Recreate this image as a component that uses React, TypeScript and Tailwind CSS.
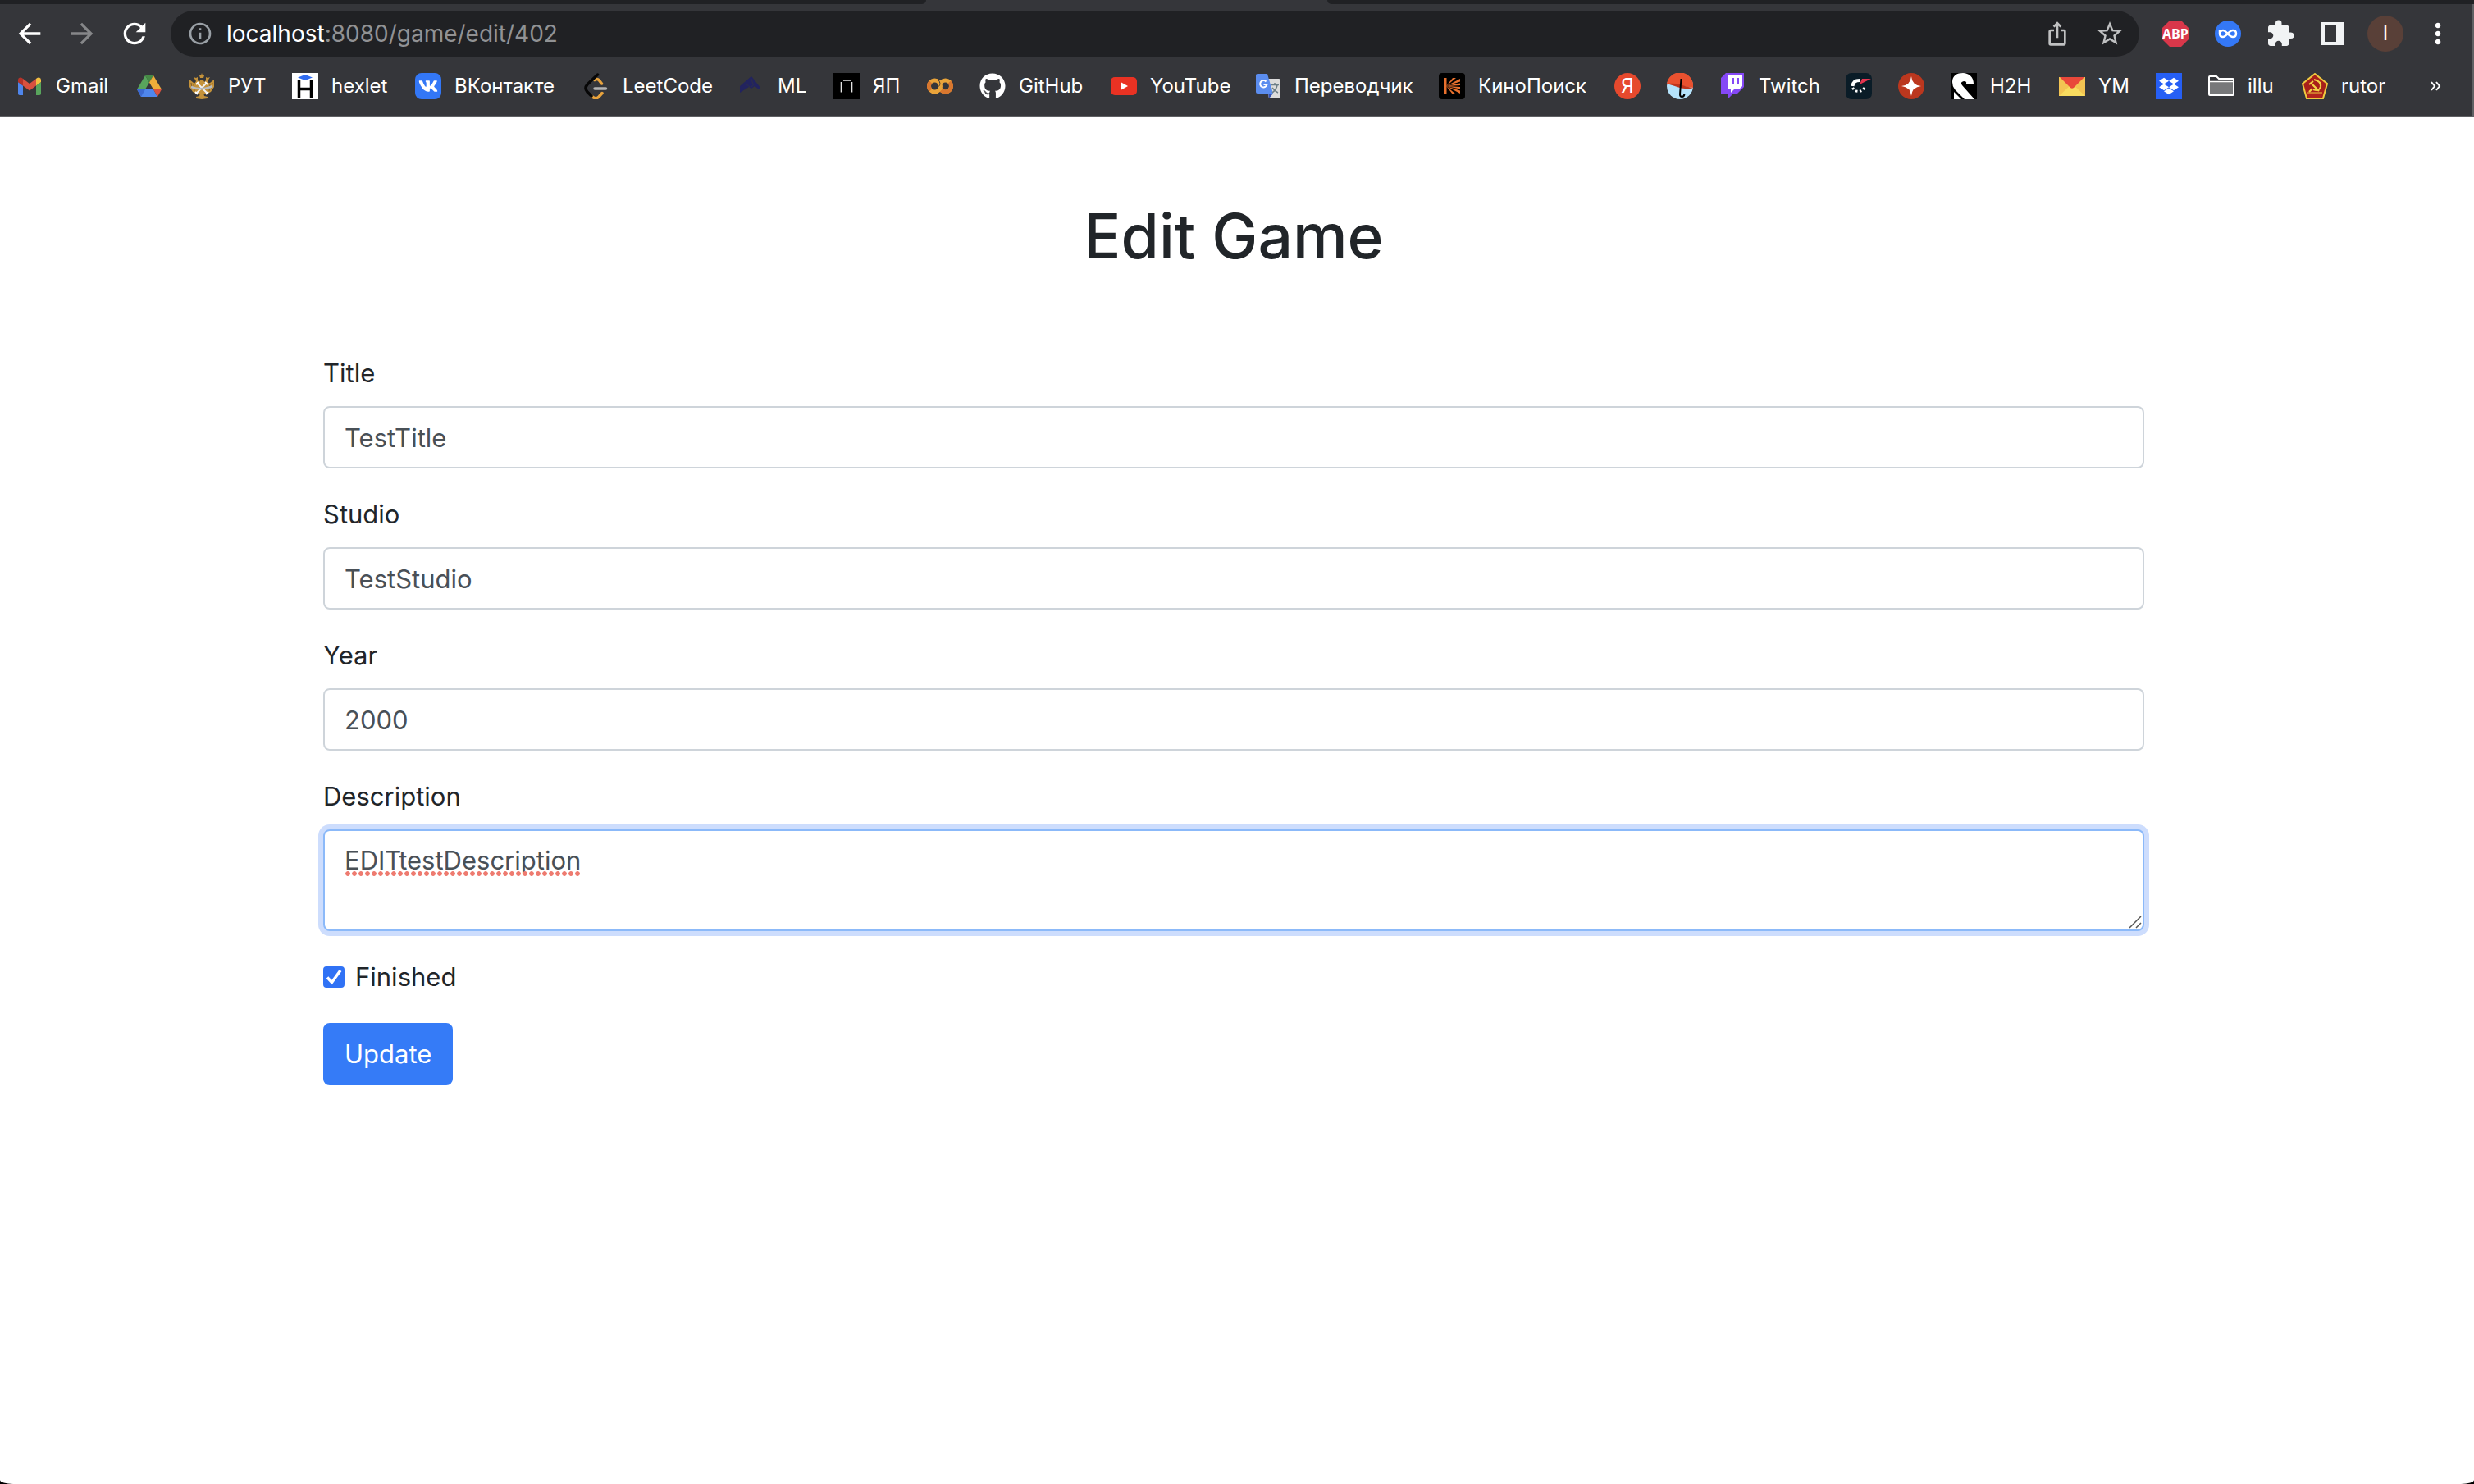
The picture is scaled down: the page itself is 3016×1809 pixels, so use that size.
import { useState, type ReactNode } from "react";
import {
  MdArrowBack,
  MdArrowForward,
  MdExtension,
  MdInfoOutline,
  MdIosShare,
  MdMoreVert,
  MdRefresh,
  MdStarBorder,
} from "react-icons/md";
import { FaDropbox, FaGithub, FaVk } from "react-icons/fa";

function Icon({ children }: { children: ReactNode }) {
  return (
    <svg viewBox="0 0 32 32" className="size-8 shrink-0" aria-hidden="true">
      {children}
    </svg>
  );
}

const gmail = (
  <Icon>
    <path d="M2 11l6 4.500V27H4a2 2 0 0 1-2-2z" fill="#4f86ec" />
    <path d="M24 15.500l6-4.500v14a2 2 0 0 1-2 2h-4z" fill="#58a55c" />
    <path d="M8 7l8 6 8-6v8.500l-8 6-8-6z" fill="#d85140" />
    <path d="M2 8.500a3 3 0 0 1 4.800-2.400L8 7v8.500L2 11z" fill="#b5332a" />
    <path d="M30 8.500a3 3 0 0 0-4.800-2.400L24 7v8.500l6-4.500z" fill="#f1bf42" />
  </Icon>
);

const drive = (
  <Icon>
    <path d="M1 20L11 3l5 8.500L11 20z" fill="#58a55c" />
    <path d="M11 3h10l-5 8.500z" fill="#468a45" />
    <path d="M21 3l10 17H21l-5-8.500z" fill="#eead3a" />
    <path d="M1 20h20l5 9H6z" fill="#4f86ec" />
    <path d="M1 20h10l-5 9z" fill="#3c69d0" />
    <path d="M21 20h10l-5 9z" fill="#d85140" />
  </Icon>
);

const eagle = (
  <Icon>
    <g fill="#c4923a">
      <path d="M16 0l1 3h2l-1 3h-4l-1-3h2z" />
      <path d="M6 5l3 1 2-1v4l2 2-2 3-4-1 2-3zM26 5l-3 1-2-1v4l-2 2 2 3 4-1-2-3z" />
      <path d="M1 8l5 4 5 2 3-5h4l3 5 5-2 5-4v9l-4 6-6 3h-10l-6-3-4-6z" />
      <path d="M14 24h4l1 4 4 1v2l-7 1-7-1v-2l4-1z" />
    </g>
    <path d="M3 12l1 7M6 14l1 8M29 12l-1 7M26 14l-1 8" stroke="#7b5a2a" />
    <path d="M9 25L21 13M23 25L11 13" stroke="#f1f1f1" strokeWidth="2" />
    <path d="M3 17q13 5 26-1" stroke="#b8bcc0" strokeWidth="2.500" fill="none" />
    <path d="M9 14l3-3M20 11l3 3M8 23l3 3M21 26l3-3" stroke="#ffffff" strokeWidth="2" />
  </Icon>
);

const hexlet = (
  <Icon>
    <path d="M0 0h32v32H0z" fill="#fff" />
    <path d="M7 5.500L16 2l9 3.500L16 9z" fill="#2f6bf0" />
    <path d="M8.500 9v21M23.500 9v21M8.500 19.500h15" stroke="#000" strokeWidth="3.500" />
  </Icon>
);

const vk = (
  <span className="flex size-8 shrink-0 items-center justify-center rounded-lg bg-[#3377f6]">
    <FaVk className="size-6 text-white" />
  </span>
);

const leetcode = (
  <Icon>
    <g fill="none" strokeWidth="3.500" strokeLinecap="round">
      <path d="M14 8.500q3-2 5 0l3.500 4.500M10 28q5 5 9 1l4-4.500" stroke="#e8a33d" />
      <path d="M17.500 2L5 14q-4 4.500 0 9l5 5" stroke="#070707" />
      <path d="M14 19h13.500" stroke="#b3b3b3" />
    </g>
  </Icon>
);

const ml = (
  <Icon>
    <path d="M2 24v-8L16 4l11 14-2 2-5-4-4 3-3-2z" fill="#22235f" />
    <path d="M9 13l5 4M16 7l2 7M21 12l-5 5" stroke="#35363a" strokeWidth="0.600" />
  </Icon>
);

const yap = (
  <Icon>
    <path d="M0 0h32v32H0z" fill="#000" />
    <path d="M9.500 11v12.500M22.500 11v12.500M12 9h9" stroke="#e4e4e4" strokeWidth="1.600" />
  </Icon>
);

const colab = (
  <Icon>
    <g fill="none" strokeWidth="5">
      <circle cx="9.500" cy="16" r="7" stroke="#eaa43a" />
      <path d="M4.500 11a7 7 0 0 0 0 10" stroke="#d8772f" />
      <circle cx="22.500" cy="16" r="7" stroke="#eaa43a" />
      <path d="M27.500 11a7 7 0 0 1-10 10" stroke="#d8772f" />
    </g>
    <path d="M14 8.500q3.500 4 0.500 8" stroke="#35363a" fill="none" />
  </Icon>
);

const github = <FaGithub className="size-8 shrink-0 text-white" />;

const youtube = (
  <Icon>
    <rect y="5" width="32" height="22" rx="5" fill="#e93223" />
    <path d="M13 11.500l8 4.500-8 4.500z" fill="#fff" />
  </Icon>
);

const translate = (
  <Icon>
    <path d="M12 7h17a2 2 0 0 1 2 2v20a2 2 0 0 1-2 2H17z" fill="#dcdcdc" />
    <path d="M16 25h6l-5 6z" fill="#3552b5" />
    <path d="M3 1h12l7 24H3a2 2 0 0 1-2-2V3a2 2 0 0 1 2-2z" fill="#5b8def" />
    <path d="M19 14.500h10M24 12v2.500M27 15q-1 5-6 9M21 18q3 4 7 6" stroke="#6d7f87" strokeWidth="1.500" fill="none" />
    <path d="M13.500 10.500a4.200 4.200 0 1 0 1 3.500H10.500" stroke="#fff" strokeWidth="2" fill="none" />
  </Icon>
);

const kinopoisk = (
  <Icon>
    <rect width="32" height="32" rx="4" fill="#000" />
    <g fill="#e8702d">
      <path d="M6 6h3.500v20H6z" />
      <path d="M9 16L17 6h4z" />
      <path d="M9 16l17-9v3.500z" />
      <path d="M9 16l17-3.500V15z" />
      <path d="M9 16l17 1v2.500z" />
      <path d="M9 16l17 5.500V25z" />
      <path d="M9 16l12 10h-4z" />
    </g>
  </Icon>
);

const yandex = (
  <span className="flex size-8 shrink-0 items-center justify-center rounded-full bg-[#e6492d] text-2xl text-white">
    Я
  </span>
);

const umbrella = (
  <Icon>
    <circle cx="16" cy="16" r="16" fill="#b5e3fb" />
    <path d="M0 13A16 16 0 0 1 32 18z" fill="#e9512f" />
    <path d="M0 13q10-1 16 1t16 4.500q-10 1.500-16-0.500T0 13z" fill="#c0351c" />
    <path d="M17.500 7l-1.500 19q0 3 2.500 3t3-3.500" stroke="#000" strokeWidth="2" fill="none" />
  </Icon>
);

const twitch = (
  <Icon>
    <path d="M2 6l6-6h22v17l-9 9h-5l-6 6v-6H2z" fill="#8548f6" />
    <path d="M10 2h18v14l-4 4h-6l-4 4v-4h-4z" fill="#fff" />
    <path d="M16 6h2v7h-2zM22 6h2v7h-2z" fill="#8548f6" />
  </Icon>
);

const gauge = (
  <Icon>
    <rect width="32" height="32" rx="7" fill="#0a1c27" />
    <path d="M17 9q-8 0-8.500 7" stroke="#fff" strokeWidth="4" fill="none" />
    <path d="M8.500 18a8 8 0 0 0 15-2" stroke="#fff" strokeWidth="3" strokeDasharray="2.500 2.500" fill="none" />
    <path d="M17 14l3-7h11z" fill="#e5344f" />
  </Icon>
);

const sparkle = (
  <Icon>
    <circle cx="16" cy="16" r="16" fill="#bb371e" />
    <path d="M16 4q1 11 12 12-11 1-12 12-1-11-12-12 11-1 12-12z" fill="#fff" />
  </Icon>
);

const h2h = (
  <Icon>
    <path d="M0 0h32v32H0z" fill="#000" />
    <path d="M2 11C2 3 8 0 15 0s13 5 13 13h-9q1-3-3-3-5 1-2 5l15 17H17L5 20Q2 16 2 11z" fill="#fff" />
    <path d="M4 23l9 9H4z" fill="#fff" />
  </Icon>
);

const mail = (
  <Icon>
    <path d="M0 5h32v23H0z" fill="#f3c452" />
    <path d="M0 28l14-13h4l14 13z" fill="#f8dc5f" />
    <path d="M1 5h30L18 18q-2 1.500-4 0z" fill="#e9483a" />
  </Icon>
);

const dropbox = (
  <span className="flex size-8 shrink-0 items-center justify-center bg-[#265ff5]">
    <FaDropbox className="size-6 text-white" />
  </span>
);

const folder = (
  <Icon>
    <path d="M1 26V5q0-1 1-1h8l3 3h17q1 0 1 1v18q0 1-1 1H2q-1 0-1-1z" fill="#35363a" stroke="#fff" strokeWidth="2" />
    <path d="M2 11h28v15H2z" fill="#77787a" />
    <path d="M1 10.500h30" stroke="#fff" strokeWidth="1.500" />
  </Icon>
);

const rutor = (
  <Icon>
    <path d="M16 1l15 12-5 18H6L1 13z" fill="#a8201a" stroke="#f0c93f" strokeWidth="2" />
    <path d="M8 24h16v6H8z" fill="#b3241c" />
    <path d="M15 8q9 2 8 9-2 6-9 3M11 12l10 10M9 14l5-4M9 23l4-4" stroke="#f3d545" strokeWidth="2.200" fill="none" />
    <path d="M7 24h18" stroke="#f0c93f" strokeWidth="1" />
  </Icon>
);

const bookmarks: { icon: ReactNode; label: string; text?: string; width: string }[] = [
  { icon: gmail, label: "Gmail", text: "Gmail", width: "w-[146px]" },
  { icon: drive, label: "Google Drive", width: "w-16" },
  { icon: eagle, label: "РУТ", text: "РУТ", width: "w-[126px]" },
  { icon: hexlet, label: "hexlet", text: "hexlet", width: "w-[150px]" },
  { icon: vk, label: "ВКонтакте", text: "ВКонтакте", width: "w-[205px]" },
  { icon: leetcode, label: "LeetCode", text: "LeetCode", width: "w-[189px]" },
  { icon: ml, label: "ML", text: "ML", width: "w-[116px]" },
  { icon: yap, label: "ЯП", text: "ЯП", width: "w-[114px]" },
  { icon: colab, label: "Colab", width: "w-16" },
  { icon: github, label: "GitHub", text: "GitHub", width: "w-40" },
  { icon: youtube, label: "YouTube", text: "YouTube", width: "w-44" },
  { icon: translate, label: "Переводчик", text: "Переводчик", width: "w-56" },
  { icon: kinopoisk, label: "КиноПоиск", text: "КиноПоиск", width: "w-[214px]" },
  { icon: yandex, label: "Яндекс", width: "w-16" },
  { icon: umbrella, label: "Umbrella", width: "w-16" },
  { icon: twitch, label: "Twitch", text: "Twitch", width: "w-[154px]" },
  { icon: gauge, label: "Gauge", width: "w-16" },
  { icon: sparkle, label: "Sparkle", width: "w-16" },
  { icon: h2h, label: "H2H", text: "H2H", width: "w-[132px]" },
  { icon: mail, label: "YM", text: "YM", width: "w-[118px]" },
  { icon: dropbox, label: "Dropbox", width: "w-16" },
  { icon: folder, label: "illu", text: "illu", width: "w-[114px]" },
  { icon: rutor, label: "rutor", text: "rutor", width: "w-[114px]" },
];

function ToolButton({ label, children }: { label: string; children: ReactNode }) {
  return (
    <button type="button" aria-label={label} className="flex h-14 w-16 shrink-0 items-center justify-center">
      {children}
    </button>
  );
}

function BrowserBar() {
  return (
    <header className="border-b-2 border-[#5f6063] bg-[#35363a] text-white">
      <div className="flex h-[5px]">
        <div className="w-[1129px] rounded-br-lg bg-[#202124]" />
        <div className="w-[489px]" />
        <div className="flex-1 rounded-bl-lg bg-[#202124]" />
      </div>
      <div className="border-r-2 border-[#5f6063]">
        <div className="flex items-center pt-2 pr-[10px] pl-1">
          <ToolButton label="Back">
            <MdArrowBack className="size-10" />
          </ToolButton>
          <ToolButton label="Forward">
            <MdArrowForward className="size-10 text-[#868789]" />
          </ToolButton>
          <ToolButton label="Reload">
            <MdRefresh className="size-10" />
          </ToolButton>
          <div className="mx-3 flex h-14 flex-1 items-center rounded-full bg-[#202124] pr-1 pl-5">
            <MdInfoOutline className="size-8 shrink-0 text-[#9aa0a6]" />
            <p className="flex-1 pl-4 text-[28px] leading-10 text-[#919294]">
              <span className="text-white">localhost</span>:8080/game/edit/402
            </p>
            <ToolButton label="Share">
              <MdIosShare className="size-8 text-[#c0c1c2]" />
            </ToolButton>
            <ToolButton label="Bookmark this page">
              <MdStarBorder className="size-9 text-[#c0c1c2]" />
            </ToolButton>
          </div>
          <ToolButton label="Adblock Plus">
            <svg viewBox="0 0 32 32" className="size-8">
              <path d="M9 0h14l9 9v14l-9 9H9l-9-9V9z" fill="#d9374a" />
              <text
                x="16"
                y="22"
                textAnchor="middle"
                fontFamily="Open Sans, sans-serif"
                fontSize="16"
                fontWeight="700"
                fill="#fff"
              >
                ABP
              </text>
            </svg>
          </ToolButton>
          <ToolButton label="Infinity">
            <svg viewBox="0 0 32 32" className="size-8">
              <circle cx="16" cy="16" r="16" fill="#3478f6" />
              <path
                d="M6 12v4q0 4 4 4c4 0 7-8 12-8q4 0 4 4t-4 4c-5 0-8-8-12-8q-2 0-3 1.500"
                fill="none"
                stroke="#fff"
                strokeWidth="2.500"
              />
            </svg>
          </ToolButton>
          <ToolButton label="Extensions">
            <MdExtension className="size-9 text-[#f1f3f4]" />
          </ToolButton>
          <ToolButton label="Side panel">
            <svg viewBox="0 0 28 28" className="size-7">
              <path d="M0 0h28v28H0zM4 4v20h14V4z" fill="#f1f3f4" fillRule="evenodd" />
            </svg>
          </ToolButton>
          <ToolButton label="Profile">
            <span className="flex size-11 items-center justify-center rounded-full bg-[#594038] text-2xl">I</span>
          </ToolButton>
          <ToolButton label="Menu">
            <MdMoreVert className="size-10" />
          </ToolButton>
        </div>
        <nav aria-label="Bookmarks" className="flex h-[72px] items-center pl-5">
          {bookmarks.map((b) => (
            <a
              key={b.label}
              href="#"
              aria-label={b.label}
              className={`flex shrink-0 items-center gap-4 text-2xl leading-8 whitespace-nowrap ${b.width}`}
            >
              {b.icon}
              {b.text && <span>{b.text}</span>}
            </a>
          ))}
          <button type="button" aria-label="More bookmarks" className="ml-auto pr-[38px]">
            <svg viewBox="0 0 14 14" className="size-[14px]" fill="none" stroke="#fff" strokeWidth="2">
              <path d="M2 2l4 5-4 5M8 2l4 5-4 5" />
            </svg>
          </button>
        </nav>
      </div>
    </header>
  );
}

const labelClass = "text-[31px] leading-[48px] text-[#212529]";
const controlClass =
  "block w-full rounded-lg border-2 bg-white px-6 py-3 text-[31px] leading-[48px] text-[#495057] outline-none";

function TextField({ id, label, initial }: { id: string; label: string; initial: string }) {
  const [value, setValue] = useState(initial);
  return (
    <div className="flex flex-col gap-4">
      <label htmlFor={id} className={labelClass}>
        {label}
      </label>
      <input
        id={id}
        type="text"
        value={value}
        onChange={(e) => setValue(e.target.value)}
        className={`${controlClass} h-[76px] border-[#ced4da]`}
      />
    </div>
  );
}

export default function App() {
  const [description, setDescription] = useState("EDITtestDescription");
  const [finished, setFinished] = useState(true);

  return (
    <div className="min-h-screen bg-black font-[Inter,sans-serif]">
      <div className="flex min-h-screen flex-col bg-white [border-radius:0_0_16px_16px/0_0_5px_5px]">
        <BrowserBar />
        <main className="pt-24 pr-2">
          <div className="mx-auto max-w-[2220px]">
            <h1 className="text-center text-[75px] leading-[98px] font-medium text-[#212529]">Edit Game</h1>
            <form className="flex flex-col gap-8 pt-[94px]" onSubmit={(e) => e.preventDefault()}>
              <TextField id="title" label="Title" initial="TestTitle" />
              <TextField id="studio" label="Studio" initial="TestStudio" />
              <TextField id="year" label="Year" initial="2000" />
              <div className="flex flex-col gap-4">
                <label htmlFor="description" className={labelClass}>
                  Description
                </label>
                <div className="relative">
                  <textarea
                    id="description"
                    spellCheck={false}
                    value={description}
                    onChange={(e) => setDescription(e.target.value)}
                    className={`${controlClass} h-[124px] resize-none border-[#8bb9f9] ring-6 ring-[#cdddfd]`}
                  />
                  <div className="pointer-events-none absolute top-[51px] left-[26px] h-[6px] w-[288px] bg-[radial-gradient(circle,#ee7b70_2.5px,transparent_3.2px)] bg-size-[8px_6px] bg-repeat-x" />
                  <svg
                    viewBox="0 0 16 16"
                    className="pointer-events-none absolute right-[3px] bottom-[3px] size-4"
                    stroke="#555"
                    strokeWidth="1.500"
                  >
                    <path d="M1 15L15 1M9 15l6-6" />
                  </svg>
                </div>
              </div>
              <div className="flex items-center gap-[13px]">
                <span className="grid size-[26px] place-items-center">
                  <input
                    id="finished"
                    type="checkbox"
                    checked={finished}
                    onChange={(e) => setFinished(e.target.checked)}
                    className="col-start-1 row-start-1 size-[26px] appearance-none rounded border-2 border-[#8a8a8a] checked:border-[#3072f5] checked:bg-[#3072f5]"
                  />
                  {finished && (
                    <svg
                      viewBox="0 0 26 26"
                      className="pointer-events-none col-start-1 row-start-1 size-[26px]"
                      fill="none"
                      stroke="#fff"
                      strokeWidth="3.500"
                    >
                      <path d="M5 13.500l5.500 6L21 5" />
                    </svg>
                  )}
                </span>
                <label htmlFor="finished" className={labelClass}>
                  Finished
                </label>
              </div>
              <button
                type="submit"
                className="self-start rounded-lg border-2 border-[#357bf7] bg-[#357bf7] px-6 py-3 text-[31px] leading-[48px] text-white"
              >
                Update
              </button>
            </form>
          </div>
        </main>
      </div>
    </div>
  );
}
